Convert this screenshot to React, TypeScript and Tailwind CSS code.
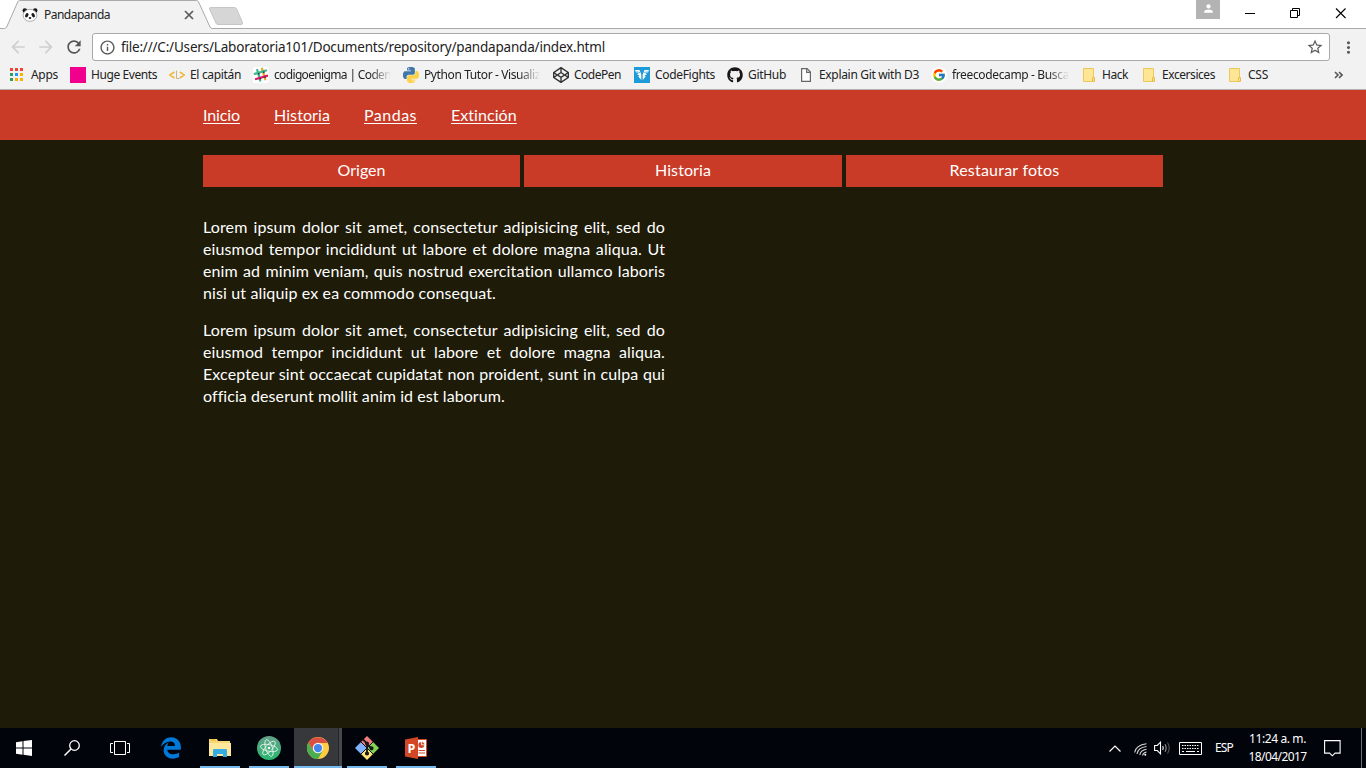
import { useLayoutEffect, useRef, type ReactNode } from "react";
import { FaCodepen, FaEdgeLegacy, FaGithub } from "react-icons/fa";
import { FcGoogle } from "react-icons/fc";
import { MdArrowBack, MdArrowForward, MdInfoOutline, MdMoreVert, MdPerson, MdRefresh, MdStarBorder } from "react-icons/md";

/** Text whose letter spacing is tuned so that it takes up a given width. */
function FitText({ width, className = "", children }: { width: number; className?: string; children: string }) {
  const ref = useRef<HTMLSpanElement>(null);
  useLayoutEffect(() => {
    const el = ref.current;
    if (!el) return;
    el.style.letterSpacing = "0px";
    const natural = el.getBoundingClientRect().width;
    el.style.letterSpacing = `${(width - natural) / children.length}px`;
  }, [width, children]);
  return (
    <span ref={ref} className={`inline-block whitespace-pre ${className}`}>
      {children}
    </span>
  );
}

function Panda() {
  return (
    <svg width="16" height="16" viewBox="0 0 16 16">
      <circle cx="2.8" cy="3.6" r="2.3" fill="#1b1b1b" />
      <circle cx="13.2" cy="3.6" r="2.3" fill="#1b1b1b" />
      <ellipse cx="8" cy="8.3" rx="6.9" ry="6" fill="#fff" stroke="#8d8d8d" strokeWidth=".7" />
      <ellipse cx="4.8" cy="8.2" rx="1.5" ry="2.3" fill="#1b1b1b" transform="rotate(30 4.8 8.2)" />
      <ellipse cx="11.2" cy="8.2" rx="1.5" ry="2.3" fill="#1b1b1b" transform="rotate(-30 11.2 8.2)" />
      <ellipse cx="8" cy="11" rx="1.3" ry=".9" fill="#1b1b1b" />
    </svg>
  );
}

function AppsGrid() {
  const colors = ["#f44336", "#f44336", "#f44336", "#2e9e5b", "#2196f3", "#fbb000", "#2e9e5b", "#fbb000", "#fbb000"];
  return (
    <svg width="16" height="16" viewBox="0 0 16 16">
      {colors.map((c, i) => (
        <rect key={i} x={1 + (i % 3) * 5} y={1 + Math.floor(i / 3) * 5} width="3" height="3" fill={c} />
      ))}
    </svg>
  );
}

function Capitan() {
  return (
    <svg width="16" height="16" viewBox="0 0 16 16" fill="none" stroke="#f0b83c" strokeWidth="1.5">
      <path d="M5.5 5 .8 8l4.7 3M10.8 5 15.400 8l-4.600 3" />
      <path d="M7.5 3.5v8h3" stroke="#c9b48a" strokeWidth="1" />
    </svg>
  );
}

function Slack() {
  return (
    <svg width="16" height="16" viewBox="0 0 16 16">
      <rect width="16" height="16" rx="2" fill="#fff" />
      <g strokeWidth="2.3" strokeLinecap="round">
        <path d="M4.2 3 7.2 13.5" stroke="#3eb991" />
        <path d="M9.1 1.8 12.2 12.2" stroke="#e9a820" />
        <path d="M1.8 6.8 13 3.5" stroke="#3eb991" />
        <path d="M3 12 14 8.8" stroke="#e01765" />
      </g>
      <path d="m4.8 6.2 1.500-.4.5 1.400-1.500.5zM9.800 4.700l1.500-.4.5 1.400-1.500.5zM6.200 11.200l1.500-.4.5 1.400-1.500.4zM11 9.700l1.500-.4.4 1.400-1.400.4z" fill="#333448" />
    </svg>
  );
}

const SNAKE =
  "M14.25.18l.9.2.73.26.59.3.45.32.34.34.25.34.16.33.1.3.04.26.02.2-.01.13V8.5l-.05.63-.13.55-.21.46-.26.38-.3.31-.33.25-.35.19-.35.14-.33.1-.3.07-.26.04-.21.02H8.77l-.69.05-.59.14-.5.22-.41.27-.33.32-.27.35-.2.36-.15.37-.1.35-.07.32-.04.27-.02.21v3.06H3.17l-.21-.03-.28-.07-.32-.12-.35-.18-.36-.26-.36-.36-.35-.46-.32-.59-.28-.73-.21-.88-.14-1.05-.05-1.23.06-1.22.16-1.04.24-.87.32-.71.36-.57.4-.44.42-.33.42-.24.4-.16.36-.1.32-.05.24-.01h.16l.06.01h8.16v-.83H6.18l-.01-2.75-.02-.37.05-.34.11-.31.17-.28.25-.26.31-.23.38-.2.44-.18.51-.15.58-.12.64-.1.71-.06.77-.04.84-.02 1.27.05zm-6.3 1.98l-.23.33-.08.41.08.41.23.34.33.22.41.09.41-.09.33-.22.23-.34.08-.41-.08-.41-.23-.33-.33-.22-.41-.09-.41.09z";

function Python() {
  return (
    <svg width="16" height="16" viewBox="0 0 24 24">
      <path d={SNAKE} fill="#3f77a8" />
      <path d={SNAKE} fill="#fdd247" transform="rotate(180 12 12)" />
    </svg>
  );
}

function CodeFights() {
  return (
    <svg width="16" height="16" viewBox="0 0 16 16">
      <rect width="16" height="16" fill="#1d9bd8" />
      <path d="M1 3h4.500L7.300 7.500V13L4.300 9.500 5.500 8.500 3 7.500 4.500 6.300 2 5.300zM15 3h-4.500L8.700 7.500V13l3-3.500-1.200-1L13 7.500l-1.500-1.200 2.500-1z" fill="#fff" />
      <path d="M2.500 4.700 6 5.600M13.500 4.700 10 5.600" stroke="#1d9bd8" strokeWidth=".7" />
    </svg>
  );
}

function FileIcon() {
  return (
    <svg width="16" height="16" viewBox="0 0 16 16" fill="#fff" stroke="#666" strokeWidth="1.2">
      <path d="M3.600 1.600h5.500l3.300 3.500v9.300H3.600z" />
      <path d="M8.700 1.600v3.800h3.700" fill="none" />
    </svg>
  );
}

function Folder() {
  return (
    <svg width="16" height="16" viewBox="0 0 16 16">
      <path d="M2.500 1.500h10v13h-10z" fill="#ffe694" stroke="#ecc75b" />
      <rect x="11.500" y="10.500" width="2" height="4" rx=".5" fill="#ffe694" stroke="#e7b93f" />
    </svg>
  );
}

type Bookmark = { label: string; width: number; box: string; icon: ReactNode; fade?: boolean };

const bookmarks: Bookmark[] = [
  { label: "Apps", width: 27, box: "w-[60px]", icon: <span className="-ml-px block w-[17px]"><AppsGrid /></span> },
  { label: "Huge Events", width: 66, box: "w-[99px]", icon: <span className="block size-4 bg-[#f0008c]" /> },
  { label: "El capitán", width: 51, box: "w-[84px]", icon: <Capitan /> },
  { label: "codigoenigma | Coden", width: 117, box: "w-[150px]", icon: <Slack />, fade: true },
  { label: "Python Tutor - Visualiz", width: 116, box: "w-[150px]", icon: <Python />, fade: true },
  { label: "CodePen", width: 47, box: "w-[81px]", icon: <FaCodepen size={16} className="text-[#333]" /> },
  { label: "CodeFights", width: 60, box: "w-[93px]", icon: <CodeFights /> },
  { label: "GitHub", width: 38, box: "w-[71px]", icon: <FaGithub size={16} className="text-[#181616]" /> },
  { label: "Explain Git with D3", width: 100, box: "w-[133px]", icon: <FileIcon /> },
  { label: "freecodecamp - Busca", width: 117, box: "w-[150px]", icon: <span className="flex size-4 items-center justify-center rounded-full bg-white"><FcGoogle size={14} /></span>, fade: true },
  { label: "Hack", width: 26, box: "w-[60px]", icon: <Folder /> },
  { label: "Excersices", width: 53, box: "w-[86px]", icon: <Folder /> },
  { label: "CSS", width: 20, box: "w-[107px]", icon: <Folder /> },
];

function TabStrip() {
  return (
    <header className="flex h-[29px] items-start bg-white">
      <div className="relative h-[29px] w-[246px]">
        <svg className="absolute inset-0" width="246" height="29" viewBox="0 0 246 29">
          <path d="M0 28.500H4.500Q6 28.500 6.700 27L17.700 2Q18.300.5 19.500.5H196.500Q198 .5 198.600 2L210 27Q210.700 28.500 212 28.500H246" fill="#f2f2f2" stroke="#a9a9a9" />
          <path d="M7 28.500H210" stroke="#f2f2f2" />
          <path d="M210.500 7.500H234.500Q236 7.500 236.600 9L242.500 22.500Q243 24.500 241.500 24.500H218Q216.500 24.500 215.900 23L209.500 9Q209 7.500 210.500 7.500z" fill="#d6d6d6" stroke="#c6c6c6" />
        </svg>
        <div className="relative flex h-[29px] items-center pl-[22px] pt-px">
          <Panda />
          <FitText width={66} className="ml-[6px] text-[12px] text-[#222]">Pandapanda</FitText>
          <svg className="ml-[74px]" width="10" height="10" viewBox="0 0 10 10" stroke="#5a5a5a" strokeWidth="1.700">
            <path d="m1 1 8 8M9 1 1 9" />
          </svg>
        </div>
      </div>
      <div className="flex h-[29px] flex-1 items-start justify-end border-b border-[#a9a9a9]">
        <div className="flex h-[19px] w-6 items-start justify-center bg-[#b3b3b3] pt-[2px] text-white">
          <MdPerson size={13} />
        </div>
        <svg width="146" height="27" viewBox="0 0 146 27" fill="none" stroke="#000">
          <path d="M25 13.500h10" />
          <path d="M70.500 10.500h7v7h-7zM72.500 10V8.500h7v7H78" />
          <path d="m116 8.500 9.500 9.500M125.500 8.500l-9.500 9.500" strokeWidth="1.100" />
        </svg>
      </div>
    </header>
  );
}

function AddressBar() {
  return (
    <div className="flex h-8 items-center bg-[#f2f2f2] pl-[8px] pt-1">
      <MdArrowBack size={20} className="text-[#cfcfcf]" />
      <MdArrowForward size={20} className="ml-2 text-[#cfcfcf]" />
      <MdRefresh size={20} className="ml-2 text-[#555]" />
      <div className="ml-2 flex h-7 w-[1238px] items-center rounded-[3px] border border-[#a9a9a9] bg-white pl-[6px]">
        <MdInfoOutline size={17} className="text-[#5a5a5a]" />
        <FitText width={484} className="ml-[5px] text-[13.500px] text-[#222]">
          file:///C:/Users/Laboratoria101/Documents/repository/pandapanda/index.html
        </FitText>
        <MdStarBorder size={18} className="ml-auto mr-[5px] text-[#5a5a5a]" />
      </div>
      <MdMoreVert size={19} className="ml-[9px] text-[#5a5a5a]" />
    </div>
  );
}

function BookmarksBar() {
  return (
    <nav className="flex h-[29px] items-center border-b border-[#b5b0b0] bg-[#f2f2f2] pl-[10px] text-[12px] text-[#222]">
      {bookmarks.map((b) => (
        <div key={b.label} className={`flex shrink-0 items-center gap-[5px] ${b.box}`}>
          <span className="shrink-0">{b.icon}</span>
          {b.fade ? (
            <FitText width={b.width} className="[mask-image:linear-gradient(to_right,black_82%,transparent)]">{b.label}</FitText>
          ) : (
            <FitText width={b.width}>{b.label}</FitText>
          )}
        </div>
      ))}
      <svg width="9" height="8" viewBox="0 0 9 8" fill="none" stroke="#555" strokeWidth="1.600">
        <path d="m1 1 3 3-3 3M5 1l3 3-3 3" />
      </svg>
    </nav>
  );
}

const menu = [
  { label: "Inicio", width: 37 },
  { label: "Historia", width: 56 },
  { label: "Pandas", width: 53 },
  { label: "Extinción", width: 66 },
];

const tabs = [
  { label: "Origen", width: 48 },
  { label: "Historia", width: 56 },
  { label: "Restaurar fotos", width: 110 },
];

const paragraphs = [
  {
    lines: [
      "Lorem ipsum dolor sit amet, consectetur adipisicing elit, sed do",
      "eiusmod tempor incididunt ut labore et dolore magna aliqua. Ut",
      "enim ad minim veniam, quis nostrud exercitation ullamco laboris",
    ],
    last: "nisi ut aliquip ex ea commodo consequat.",
    width: 293,
  },
  {
    lines: [
      "Lorem ipsum dolor sit amet, consectetur adipisicing elit, sed do",
      "eiusmod tempor incididunt ut labore et dolore magna aliqua.",
      "Excepteur sint occaecat cupidatat non proident, sunt in culpa qui",
    ],
    last: "officia deserunt mollit anim id est laborum.",
    width: 301,
  },
];

function Page() {
  return (
    <main className="flex-1 bg-[#1e1b08] font-['Lato',sans-serif] text-[16px] leading-[22px] text-white">
      <nav className="h-[50px] bg-[#c93b26]">
        <ul className="mx-auto flex h-full w-[960px] items-center gap-[34px]">
          {menu.map((m) => (
            <li key={m.label} className="h-[22px]">
              <a href="#" className="block">
                <FitText width={m.width} className="align-top underline decoration-1 underline-offset-2">{m.label}</FitText>
              </a>
            </li>
          ))}
        </ul>
      </nav>
      <section className="mx-auto mt-[15px] grid w-[960px] grid-cols-3 gap-[4.400px]">
        {tabs.map((t) => (
          <a key={t.label} href="#" className="flex h-8 items-center justify-center bg-[#c93b26] pb-[2px]">
            <FitText width={t.width}>{t.label}</FitText>
          </a>
        ))}
      </section>
      <section className="mx-auto mt-[29px] flex w-[960px] flex-col gap-[15px]">
        {paragraphs.map((p, i) => (
          <p key={i} className="w-[462px]">
            {p.lines.map((line) => (
              <span key={line} className="block whitespace-nowrap [text-align-last:justify] tracking-[0.120px]">{line}</span>
            ))}
            <FitText width={p.width} className="align-top">{p.last}</FitText>
          </p>
        ))}
      </section>
    </main>
  );
}

function Explorer() {
  return (
    <svg width="24" height="24" viewBox="0 0 24 24">
      <path d="M1 3h8l1 2h12v15H1z" fill="#f8d775" />
      <path d="M1 7h22v13H1z" fill="#ffe79b" />
      <path d="M2.500 4h5" stroke="#e8ad20" />
      <path d="M5 21v-7q0-1 1-1h12q1 0 1 1v7h-4v-3H9v3z" fill="#35ade3" />
    </svg>
  );
}

function Atom() {
  return (
    <svg width="24" height="24" viewBox="0 0 24 24">
      <defs>
        <linearGradient id="atomBg" x2="0" y2="1">
          <stop stopColor="#63a18a" />
          <stop offset="1" stopColor="#28b86f" />
        </linearGradient>
      </defs>
      <circle cx="12" cy="12" r="12" fill="url(#atomBg)" />
      <g fill="none" stroke="#e2f2e9" strokeWidth=".9">
        <ellipse cx="12" cy="12" rx="3.300" ry="8.700" transform="rotate(-18 12 12)" />
        <ellipse cx="12" cy="12" rx="3.300" ry="8.700" transform="rotate(42 12 12)" />
        <ellipse cx="12" cy="12" rx="3.300" ry="8.700" transform="rotate(102 12 12)" />
      </g>
      <circle cx="12" cy="12" r="1.300" fill="#fff" />
    </svg>
  );
}

function Chrome() {
  return (
    <svg width="22" height="22" viewBox="0 0 24 24">
      <circle cx="12" cy="12" r="12" fill="#ffcd42" />
      <path d="M1.600 6A12 12 0 0 0 12 24L17.200 15 12 12 6.800 15z" fill="#4aae51" />
      <path d="M1.600 6A12 12 0 0 1 22.400 6.500H12L6.800 15z" fill="#da4f43" />
      <circle cx="12" cy="12" r="5.700" fill="#f5f5f5" />
      <circle cx="12" cy="12" r="4.500" fill="#4586ee" />
    </svg>
  );
}

function GitIcon() {
  return (
    <svg width="24" height="24" viewBox="0 0 24 24">
      <path d="m12 0 6 6-6 6-6-6z" fill="#f47d80" />
      <path d="m6 6 6 6-6 6-6-6z" fill="#80b3ff" />
      <path d="m18 6 6 6-6 6-6-6z" fill="#81d553" />
      <path d="m12 12 6 6-6 6-6-6z" fill="#ffe27a" />
      <path d="m5.500 5.500 13 13M18.500 5.500l-13 13" stroke="#111" strokeWidth="1" />
      <g stroke="#181818" strokeWidth="1.800" fill="#181818">
        <path d="M8 3.500 12 7.500V18M12 8l4.500 4.500" fill="none" />
        <circle cx="12" cy="7.500" r="1.100" />
        <circle cx="12" cy="17.500" r="1.200" />
        <circle cx="16.500" cy="12.300" r="1.200" />
      </g>
    </svg>
  );
}

function PowerPoint() {
  return (
    <svg width="24" height="24" viewBox="0 0 24 24">
      <path d="M13 3.500h9.500v17H13z" fill="#fff" stroke="#d24726" />
      <circle cx="17.300" cy="9" r="3" fill="#d24726" />
      <path d="M17.500 8.800V5.500q3.300.2 3.500 3.300z" fill="#d24726" stroke="#fff" strokeWidth=".8" />
      <path d="M14.500 14.500H21M14.500 17H21" stroke="#d24726" />
      <path d="M1 3.500 14 1v22L1 20.500z" fill="#d24726" />
      <text x="3.600" y="16.500" fontSize="12.500" fontWeight="700" fontFamily="Open Sans, sans-serif" fill="#fff">P</text>
    </svg>
  );
}

const running = [
  { name: "explorer", icon: <Explorer />, box: "ml-[13px] w-10" },
  { name: "atom", icon: <Atom />, box: "ml-[9px] w-10" },
  { name: "chrome", icon: <Chrome />, box: "ml-[5px] w-12 bg-[linear-gradient(to_right,#37383b_44px,#242528_44px,#242528_45px,#46474a_45px)]" },
  { name: "git", icon: <GitIcon />, box: "ml-[5px] w-10" },
  { name: "powerpoint", icon: <PowerPoint />, box: "ml-[9px] w-10" },
];

function Taskbar() {
  return (
    <footer className="flex h-10 items-center bg-[#01040a] text-white">
      <svg className="ml-4" width="16" height="16" viewBox="0 0 16 16" fill="#fff">
        <path d="M0 2.200 6.500 1.300V7.500H0zM7.500 1.100 16 0v7.500H7.500zM0 8.500h6.500v6.200L0 13.800zM7.500 8.500H16V16l-8.500-1.200z" />
      </svg>
      <svg className="ml-8" width="16" height="16" viewBox="0 0 16 16" fill="none" stroke="#fff" strokeWidth="1.300">
        <circle cx="10.500" cy="5.500" r="4.800" />
        <path d="M7 9 .5 15.500" strokeWidth="1.500" />
      </svg>
      <svg className="ml-[30px]" width="20" height="16" viewBox="0 0 20 16" fill="none" stroke="#fff">
        <path d="M4.500 1.500h11v13h-11zM3 3.500H.5v9H3M17 3.500h2.500v9H17" />
      </svg>
      <FaEdgeLegacy size={22} className="ml-[30px] text-[#0078d7]" />
      <div className="flex h-10 pl-[5px]">
        {running.map((r) => (
          <div key={r.name} className={`flex h-10 items-center justify-center border-b-2 border-[#76b9ed] pt-[2px] ${r.box}`}>
            {r.icon}
          </div>
        ))}
      </div>
      <div className="ml-auto flex h-10 items-center">
        <svg width="12" height="7" viewBox="0 0 12 7" fill="none" stroke="#fff" strokeWidth="1.200">
          <path d="m.5 6.500 5.500-5.500 5.500 5.500" />
        </svg>
        <svg className="ml-[13px] mt-[2px]" width="13" height="13" viewBox="0 0 13 13" fill="none" stroke="#d5d5d5" strokeWidth="1.100">
          <path d="M.6 9.500Q2 2 12.500.8M3 11Q4 4.500 12.500 3.500M5.800 12Q6.500 7.200 12.500 6.300M8.500 12.500Q9 9.800 12.500 9" />
          <circle cx="11.300" cy="11.700" r="1" fill="#fff" stroke="none" />
        </svg>
        <svg className="ml-[7px]" width="17" height="14" viewBox="0 0 17 14" fill="none" stroke="#fff" strokeWidth="1.100">
          <path d="M.6 4.500h2.700L6.500 1.200v11.600L3.300 9.500H.6z" />
          <path d="M8.700 5q1.200 2 0 4" />
          <path d="M11 3.200q2.300 3.800 0 7.600" stroke="#999" />
          <path d="M13.500 1.500q3.500 5.500 0 11" stroke="#555" />
        </svg>
        <svg className="ml-[8px]" width="23" height="13" viewBox="0 0 23 13" fill="none" stroke="#fff">
          <path d="M.5.5h22v12H.5z" />
          <path d="M3 3.500h17M3 6.500h17" strokeDasharray="1.500 1" />
          <path d="M3 9.500h2M7 9.500h9M18 9.500h2" />
        </svg>
        <FitText width={18} className="ml-[13px] text-[12px]">ESP</FitText>
        <div className="ml-[15px] flex w-[59px] flex-col items-center text-[12px] leading-[18px]">
          <FitText width={57}>11:24 a. m.</FitText>
          <FitText width={58}>18/04/2017</FitText>
        </div>
        <svg className="ml-[17px]" width="17" height="17" viewBox="0 0 17 17" fill="none" stroke="#fff" strokeWidth="1.100">
          <path d="M.6.600h15.500v12.500h-5L8.300 15.800 5.600 13.100H.600z" />
        </svg>
        <div className="ml-5 h-10 w-[5px] border-l border-[#6b6d70]" />
      </div>
    </footer>
  );
}

export default function App() {
  return (
    <div className="flex h-[768px] w-[1366px] flex-col overflow-hidden font-['Noto_Sans',sans-serif]">
      <TabStrip />
      <AddressBar />
      <BookmarksBar />
      <Page />
      <Taskbar />
    </div>
  );
}
